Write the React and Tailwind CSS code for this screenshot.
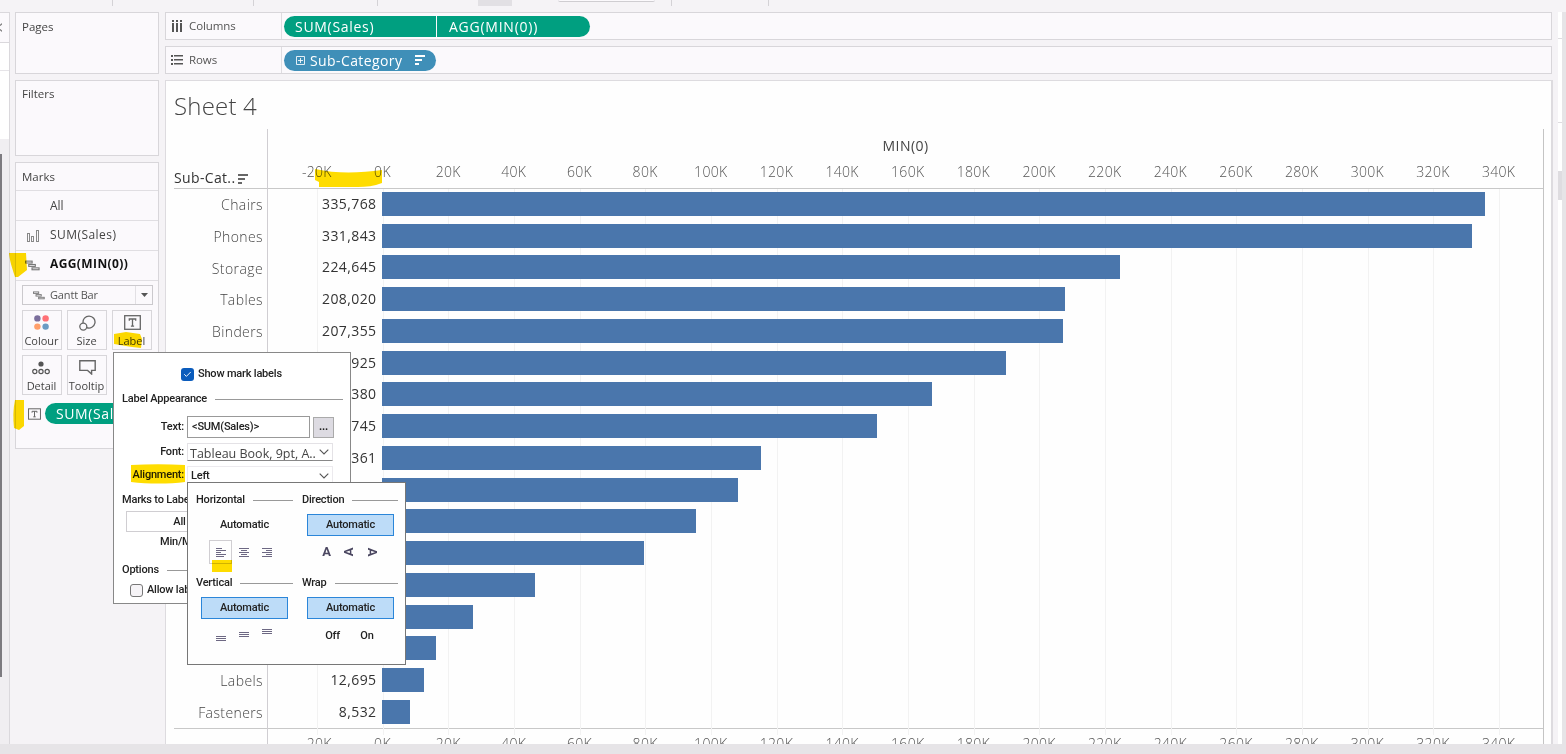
import { Check } from "lucide-react";

const UNIT = 65.67; // pixels per 20K on the axis
const ZERO = 114.5; // zero line, measured from the left edge of the pane

const rows = [
  { name: "Chairs", label: "335,768", value: 335768 },
  { name: "Phones", label: "331,843", value: 331843 },
  { name: "Storage", label: "224,645", value: 224645 },
  { name: "Tables", label: "208,020", value: 208020 },
  { name: "Binders", label: "207,355", value: 207355 },
  { name: "", label: "925", value: 189925 },
  { name: "", label: "380", value: 167380 },
  { name: "", label: "745", value: 150745 },
  { name: "", label: "361", value: 115361 },
  { name: "", label: "", value: 108300 },
  { name: "", label: "", value: 95500 },
  { name: "", label: "", value: 79600 },
  { name: "", label: "", value: 46600 },
  { name: "", label: "", value: 27500 },
  { name: "", label: "", value: 16400 },
  { name: "Labels", label: "12,695", value: 12695 },
  { name: "Fasteners", label: "8,532", value: 8532 },
];

const ticks = Array.from({ length: 19 }, (_, i) => `${(i - 1) * 20}K`);

function SortIcon({ className }) {
  return (
    <svg width="10" height="10" viewBox="0 0 10 10" className={className} fill="currentColor">
      <rect x="0" y="0" width="10" height="2" />
      <rect x="0" y="4" width="7" height="2" />
      <rect x="0" y="8" width="4" height="2" />
    </svg>
  );
}

function GanttIcon({ width = 15 }) {
  return (
    <svg width={width} height={width * 0.75} viewBox="0 0 16 12" fill="none" stroke="#777" strokeWidth="1.2">
      <rect x="0.6" y="1.2" width="7" height="2" />
      <rect x="4" y="4.8" width="7" height="2" />
      <rect x="7.5" y="8.4" width="7.5" height="2" />
    </svg>
  );
}

function BarsIcon() {
  return (
    <svg width="12" height="12" viewBox="0 0 12 12" fill="none" stroke="#888" strokeWidth="1">
      <rect x="0.5" y="3.5" width="2" height="8" />
      <rect x="4.5" y="6.5" width="2" height="5" />
      <rect x="9.5" y="0.5" width="2" height="11" />
    </svg>
  );
}

function TextIcon({ width, height }) {
  return (
    <svg width={width} height={height} viewBox="0 0 17 15" fill="none" stroke="#666">
      <rect x="0.7" y="0.7" width="15.6" height="13.6" strokeWidth="1.3" />
      <path d="M5.3 5.8V4h6.4v1.8M8.5 4v7.2M6.9 11.2h3.2" strokeWidth="1.3" />
    </svg>
  );
}

function Chevron() {
  return (
    <svg width="10" height="6" viewBox="0 0 10 6" fill="none" stroke="#555" strokeWidth="1.1">
      <path d="M0.7 0.7L5 5l4.3-4.3" />
    </svg>
  );
}

function Card({ title, className }) {
  return (
    <div className={`border border-[#d8d6da] bg-[#fbf9fc] px-1.5 text-[11.5px] leading-4 text-[#444] ${className}`}>
      {title}
    </div>
  );
}

function MarkButton({ label, children }) {
  return (
    <div className="flex h-10 w-10 flex-col items-center border border-[#d8d6da]">
      <div className="flex h-[23px] items-center">{children}</div>
      <span className="-ml-px text-[11px] leading-[14px] whitespace-nowrap text-[#444]">{label}</span>
    </div>
  );
}

function MarksCard() {
  return (
    <div className="mt-1.5 h-[287px] border border-[#d8d6da] bg-[#fbf9fc] text-[12px] text-[#444]">
      <div className="h-7 border-b border-[#e0dee2] px-1.5 text-[11.5px] leading-[27px]">Marks</div>
      <div className="h-[30px] border-b border-[#e0dee2] pl-[34px] leading-[29px]">All</div>
      <div className="flex h-[30px] items-center border-b border-[#e0dee2] pl-[11px]">
        <BarsIcon />
        <span className="ml-[11px] pb-px tracking-[0.45px]">SUM(Sales)</span>
      </div>
      <div className="flex h-[30px] items-center border-b border-[#e0dee2] pl-[9px]">
        <GanttIcon />
        <span className="ml-2.5 pb-[3px] font-bold tracking-[0.4px] text-[#111]">AGG(MIN(0))</span>
      </div>
      <div className="mx-1.5 mt-1 flex h-5 w-[131px] items-center border border-[#cbc9cd] pl-2.5">
        <GanttIcon width={12} />
        <span className="ml-[5px] flex-1 text-[11px] tracking-[-0.15px] text-[#555]">Gantt Bar</span>
        <span className="flex h-full w-[17px] items-center justify-center border-l border-[#e2e0e4]">
          <svg width="7" height="4" viewBox="0 0 7 4" fill="#555">
            <path d="M0 0h7L3.5 4z" />
          </svg>
        </span>
      </div>
      <div className="mx-1.5 mt-[5px] grid w-[130px] grid-cols-3 gap-[5px]">
        <MarkButton label="Colour">
          <svg width="15" height="15" viewBox="0 0 15 15" className="-ml-[2px]">
            <circle cx="3.4" cy="3.4" r="3.2" fill="#7b6e9c" />
            <circle cx="11.6" cy="3.4" r="3.2" fill="#ff7076" />
            <circle cx="3.4" cy="11.6" r="3.2" fill="#ff9f6b" />
            <circle cx="11.6" cy="11.6" r="3.2" fill="#6b9bc3" />
          </svg>
        </MarkButton>
        <MarkButton label="Size">
          <svg width="17" height="16" viewBox="0 0 17 16" fill="none" stroke="#666" strokeWidth="1.3">
            <path d="M4.1 8A6 6 0 1 1 7.8 12.6" />
            <circle cx="4.3" cy="11.6" r="3.5" />
          </svg>
        </MarkButton>
        <MarkButton label="Label">
          <TextIcon width={17} height={15} />
        </MarkButton>
        <MarkButton label="Detail">
          <svg width="18" height="14" viewBox="0 0 18 14" fill="none" stroke="#555" strokeWidth="1.2" className="-ml-[2px]">
            <circle cx="9" cy="3" r="2.6" fill="#555" stroke="none" />
            <circle cx="2.8" cy="10.5" r="2.1" />
            <circle cx="9" cy="10.5" r="2.1" />
            <circle cx="15.2" cy="10.5" r="2.1" />
          </svg>
        </MarkButton>
        <MarkButton label="Tooltip">
          <svg width="17" height="15" viewBox="0 0 17 15" fill="none" stroke="#666" strokeWidth="1.4">
            <path d="M0.8 0.8h15.4v9.6h-3.6v3.6l-4-3.6H0.8z" />
          </svg>
        </MarkButton>
      </div>
      <div className="mt-2 flex h-[21px] items-center pl-3">
        <TextIcon width={13} height={12} />
        <div className="ml-1 h-[21px] w-[100px] overflow-hidden rounded-l-full bg-[#009f80] pl-[11px] text-[14px] leading-[22px] font-medium tracking-[0.6px] text-white">
          SUM(Sales)
        </div>
      </div>
    </div>
  );
}

function Shelf({ icon, label, className, children }) {
  return (
    <div className={`flex h-[28px] w-[1387px] items-center border border-[#d8d6da] bg-[#fbf9fc] ${className}`}>
      <div className="flex h-full w-[116px] items-center border-r border-[#dedce0] pl-[5px]">
        {icon}
        <span className="ml-[6px] text-[11.5px] tracking-[-0.1px] text-[#555]">{label}</span>
      </div>
      <div className="flex h-[21px] pl-[2px] text-[14px] leading-[22px] font-medium text-white">{children}</div>
    </div>
  );
}

function Axis({ className }) {
  return (
    <div className={`flex pl-[16px] text-[14px] leading-5 font-light tracking-[0.3px] text-[#555] ${className}`}>
      {ticks.map((t) => (
        <span key={t} className="w-[65.67px] shrink-0 text-center">
          {t}
        </span>
      ))}
    </div>
  );
}

function Sheet() {
  return (
    <div className="mt-1.5 h-[664px] overflow-hidden border-t border-r-2 border-l border-[#dddbdf] bg-[#fefefe] pl-2">
      <h1 className="h-[48px] text-[24px] leading-[49px] font-light tracking-[0.2px] text-[#444]">Sheet 4</h1>
      <div className="flex w-[1370px] border-r border-[#c4c4c4]">
        <div className="w-[94px] shrink-0 border-r border-[#d0ced2]">
          <div className="flex h-[60px] items-end border-b border-[#c8c8c8] text-[14px] text-[#333]">
            <span className="leading-5 tracking-[0.35px]">Sub-Cat..</span>
            <SortIcon className="mb-[4px] ml-[3px] text-[#666]" />
          </div>
          <div className="h-[539.75px] border-b border-[#c8c8c8] pr-[4px] text-right text-[14px] font-light tracking-[0.4px] text-[#444]">
            {rows.map((r, i) => (
              <div key={i} className="h-[31.75px] leading-[31.5px]">
                {r.name}
              </div>
            ))}
          </div>
        </div>
        <div className="w-[1275px] shrink-0">
          <div className="h-[60px] border-b border-[#c8c8c8]">
            <div className="pt-[7px] text-center text-[14px] leading-5 tracking-[0.45px] text-[#444]">MIN(0)</div>
            <Axis className="mt-[6px]" />
          </div>
          <div className="relative h-[539.75px] border-b border-[#c8c8c8]">
            <svg className="absolute top-0 left-0 h-[546px] w-[1275px]">
              {ticks.map((t, i) => (
                <rect key={t} x={Math.round(ZERO + (i - 1) * UNIT)} y="0" width="1" height="546" fill="#f2f2f2" />
              ))}
            </svg>
            {rows.map((r, i) => (
              <div key={i} className="relative flex h-[31.75px] items-center">
                <div className="w-[114px] shrink-0 pr-[5.5px] pb-[2px] text-right text-[14px] leading-5 tracking-[0.4px] text-[#333]">
                  {r.label}
                </div>
                <div className="mb-[2px] h-6 bg-[#4a76ac]" style={{ width: (r.value / 20000) * UNIT + 0.4 }} />
              </div>
            ))}
          </div>
          <Axis className="mt-[5px]" />
        </div>
      </div>
    </div>
  );
}

function Section({ title, className }) {
  return (
    <div className={`flex h-4 items-center gap-2 ${className}`}>
      <span className="shrink-0">{title}</span>
      <span className="h-px flex-1 bg-[#999]" />
    </div>
  );
}

function LabelDialog() {
  return (
    <div className="absolute top-[352px] left-[113px] h-[252px] w-[238px] border border-[#888] bg-white font-[Roboto,sans-serif] text-[11px] leading-4 font-medium tracking-[-0.2px] text-[#222]">
      <div className="mt-[13px] flex h-4 items-center pl-[67px]">
        <span className="flex h-[13px] w-[13px] items-center justify-center rounded-[3px] bg-[#0b5cbc]">
          <Check size={9} color="#fff" strokeWidth={2.5} />
        </span>
        <span className="ml-1">Show mark labels</span>
      </div>
      <Section title="Label Appearance" className="mt-[9px] mr-[7px] ml-2" />
      <div className="mt-[9px] flex h-[22px] items-center">
        <span className="w-[70px] text-right">Text:</span>
        <span className="ml-[3px] h-[22px] w-[123px] border border-[#999] pl-1 leading-5">&lt;SUM(Sales)&gt;</span>
        <span className="ml-[3px] h-[21px] w-[21px] border border-[#aaa] bg-[#dddbe2] text-center leading-[18px] font-bold">...</span>
      </div>
      <div className="mt-[5px] flex h-[18px] items-center">
        <span className="w-[70px] text-right">Font:</span>
        <span className="ml-[3px] flex h-[18px] w-[146px] items-center overflow-hidden border border-[#e4e2e6] border-b-[#888] pr-[3px] pl-[2px]">
          <span className="flex-1 pt-[3px] font-['Open_Sans',sans-serif] text-[12.5px] font-normal tracking-[0px] whitespace-nowrap text-[#444]">
            Tableau Book, 9pt, A..
          </span>
          <Chevron />
        </span>
      </div>
      <div className="mt-[6px] flex h-4 items-center">
        <span className="w-[70px] text-right">Alignment:</span>
        <span className="ml-[3px] flex h-[18px] w-[146px] items-center border border-b-0 border-[#eceaee] pr-[3px] pl-[3px]">
          <span className="flex-1">Left</span>
          <Chevron />
        </span>
      </div>
      <Section title="Marks to Label" className="mt-[9px] mr-[7px] ml-2" />
      <div className="mt-[3px] ml-[12px] h-[21px] w-[107px] border border-[#d0ced2] text-center leading-5">All</div>
      <div className="mt-[2px] ml-[46px] h-4">Min/Max</div>
      <Section title="Options" className="mt-[12px] mr-[7px] ml-2" />
      <div className="mt-[4px] ml-[16px] flex h-4 items-center">
        <span className="h-[13px] w-[13px] rounded-[3px] border border-[#777] bg-[#f6f4f7]" />
        <span className="ml-1 whitespace-nowrap">Allow lab</span>
      </div>
    </div>
  );
}

function LinesIcon({ lines, y = 0, height = 9 }) {
  return (
    <svg width="10" height={height} fill="#6d6883">
      {lines.map(([x, w], i) => (
        <rect key={i} x={x} y={y + i * 2} width={w} height="1" />
      ))}
    </svg>
  );
}

function OptionButton({ active }) {
  return (
    <div
      className={`ml-[5px] h-[22px] w-[87px] border text-center leading-[20px] ${
        active ? "border-[#2b86d9] bg-[#bddcf8]" : "border-transparent"
      }`}
    >
      Automatic
    </div>
  );
}

function AlignmentMenu() {
  return (
    <div className="absolute top-[482px] left-[187px] grid h-[183px] w-[219px] grid-cols-[97px_96px] content-start gap-x-[9px] border border-[#777] bg-[#fefefe] pt-[9px] pl-2 font-[Roboto,sans-serif] text-[11px] leading-4 font-medium tracking-[-0.2px] text-[#222]">
      <div className="h-[83px]">
        <Section title="Horizontal" />
        <div className="mt-[6px]">
          <OptionButton />
        </div>
        <div className="mt-[4px] ml-[13px] flex">
          <span className="flex h-[24px] w-[23px] items-center justify-center border border-[#d0ced2]">
            <LinesIcon lines={[[0, 6], [0, 10], [0, 5], [0, 10], [0, 8]]} />
          </span>
          <span className="flex h-[24px] w-[23px] items-center justify-center">
            <LinesIcon lines={[[0, 10], [2, 6], [0, 10], [2, 6], [0, 10]]} />
          </span>
          <span className="flex h-[24px] w-[23px] items-center justify-center">
            <LinesIcon lines={[[0, 10], [4, 6], [0, 10], [4, 6], [0, 10]]} />
          </span>
        </div>
      </div>
      <div className="h-[83px]">
        <Section title="Direction" />
        <div className="mt-[6px]">
          <OptionButton active />
        </div>
        <div className="mt-[4px] ml-[13px] flex text-[13px] font-bold tracking-normal text-[#4b4761]">
          <span className="flex h-[24px] w-[23px] items-center justify-center">A</span>
          <span className="flex h-[24px] w-[23px] items-center justify-center">
            <span className="-rotate-90">A</span>
          </span>
          <span className="flex h-[24px] w-[23px] items-center justify-center">
            <span className="rotate-90">A</span>
          </span>
        </div>
      </div>
      <div>
        <Section title="Vertical" />
        <div className="mt-[6px]">
          <OptionButton active />
        </div>
        <div className="mt-[9px] ml-[20px] flex gap-[13px]">
          <LinesIcon lines={[[0, 10], [0, 10], [0, 10]]} y={8} height={14} />
          <LinesIcon lines={[[0, 10], [0, 10], [0, 10]]} y={4} height={14} />
          <LinesIcon lines={[[0, 10], [0, 10], [0, 10]]} y={1} height={14} />
        </div>
      </div>
      <div>
        <Section title="Wrap" />
        <div className="mt-[6px]">
          <OptionButton active />
        </div>
        <div className="mt-[9px] ml-[13px] flex">
          <span className="w-[35px] text-center">Off</span>
          <span className="w-[34px] text-center">On</span>
        </div>
      </div>
    </div>
  );
}

// Hand-drawn marker strokes on top of the window
function Highlights() {
  return (
    <svg className="pointer-events-none absolute inset-0 mix-blend-multiply" width="1566" height="754" fill="#ffdd00">
      <path d="M9 253h17l1 17-9 7h-3c-2-7-5-14-6-24z" />
      <path d="M15 400l9 0 0 26-5 4-5-2c-1-9-1-19 1-28z" />
      <path d="M114 334l12-2 14 2 2 5-1 9-9-1-18-3z" />
      <path d="M315 169c22 5 45 4 67 1v13c-8 3-16 4-24 4h-39v-5l-4-2z" />
      <path d="M131 465c18-1 36-1 54 0v17c-16 2-37 2-54 0z" />
      <path d="M212 560h20v12h-20z" />
    </svg>
  );
}

export default function App() {
  return (
    <div className="relative flex h-[754px] w-[1566px] flex-col overflow-hidden bg-[#f5f3f6] font-['Open_Sans','Noto_Sans',sans-serif]">
      <div className="flex h-3 shrink-0 items-start">
        <span className="ml-[112px] h-[6px] w-px bg-[#d4d2d6]" />
        <span className="ml-[140px] h-[6px] w-px bg-[#d4d2d6]" />
        <span className="ml-[123px] h-[6px] w-px bg-[#d4d2d6]" />
        <span className="ml-[100px] h-[6px] w-[34px] bg-[#e2e0e4]" />
        <span className="ml-[46px] h-[2px] w-[97px] rounded-b border-b border-[#cfcdd1] bg-[#fbf9fc]" />
        <span className="ml-[16px] h-[6px] w-px bg-[#d4d2d6]" />
        <span className="ml-[96px] h-[6px] w-px bg-[#d4d2d6]" />
      </div>
      <div className="flex h-[732px] shrink-0">
        <div className="w-[10px] overflow-hidden border-t border-r border-[#dad8dc] bg-[#f0eef1]">
          <div className="h-[30px] border-b border-[#dad8dc] bg-[#fbf9fc] pt-[10px]">
            <svg width="2" height="9" viewBox="0 0 2 9" fill="none" stroke="#777" strokeWidth="1.2">
              <path d="M2 0.6L0 2.5M0 6.5l2 1.9" />
            </svg>
          </div>
          <div className="h-[28px] border-b border-[#e6e4e8] bg-white" />
          <div className="h-[68px] bg-white" />
          <div className="mt-[15px] h-[523px] w-[2px] bg-[#7d7b80]" />
        </div>
        <div className="ml-[5px] w-[144px]">
          <Card title="Pages" className="h-[62px] pt-1.5" />
          <Card title="Filters" className="mt-1.5 h-[76px] pt-[5px]" />
          <MarksCard />
        </div>
        <div className="ml-[6px] w-[1388px]">
          <Shelf
            label="Columns"
            icon={
              <svg width="12" height="12" viewBox="0 0 12 12" fill="#555">
                <path d="M1 0h2v2H1zM5 0h2v2H5zM9 0h2v2H9zM1 3h2v9H1zM5 3h2v9H5zM9 3h2v9H9z" />
              </svg>
            }
          >
            <div className="w-[152px] rounded-l-full bg-[#009f80] pl-[11px] tracking-[0.7px]">SUM(Sales)</div>
            <div className="ml-px w-[153px] rounded-r-full bg-[#009f80] pl-[12px] tracking-[0.75px]">AGG(MIN(0))</div>
          </Shelf>
          <Shelf
            label="Rows"
            className="mt-1.5"
            icon={
              <svg width="12" height="10" viewBox="0 0 12 10" fill="#555">
                <path d="M0 0h2v2H0zM3 0h9v1.6H3zM0 4h2v2H0zM3 4h9v1.6H3zM0 8h2v2H0zM3 8h9v1.6H3z" />
              </svg>
            }
          >
            <div className="flex w-[152px] items-center rounded-full bg-[#3f8fb8] pl-[12px]">
              <svg width="9" height="9" viewBox="0 0 9 9" fill="none" stroke="#fff" strokeOpacity="0.85">
                <path d="M0.5 0.5h8v8h-8zM2 4.5h5M4.5 2v5" />
              </svg>
              <span className="ml-[5px] w-[105px] pt-px tracking-[0.4px]">Sub-Category</span>
              <SortIcon />
            </div>
          </Shelf>
          <Sheet />
        </div>
        <div className="ml-[5px] flex w-[4px] flex-col bg-white">
          <div className="h-[27px] border-b border-[#dedce0]" />
          <div className="h-[84px] border-b border-[#dedce0]" />
          <div className="mt-[48px] h-[29px] bg-[#dedce0]" />
        </div>
        <div className="w-[4px] bg-[#e6e4e7]" />
      </div>
      <div className="h-[10px] shrink-0 bg-[#e6e4e7]" />
      <LabelDialog />
      <AlignmentMenu />
      <Highlights />
    </div>
  );
}
